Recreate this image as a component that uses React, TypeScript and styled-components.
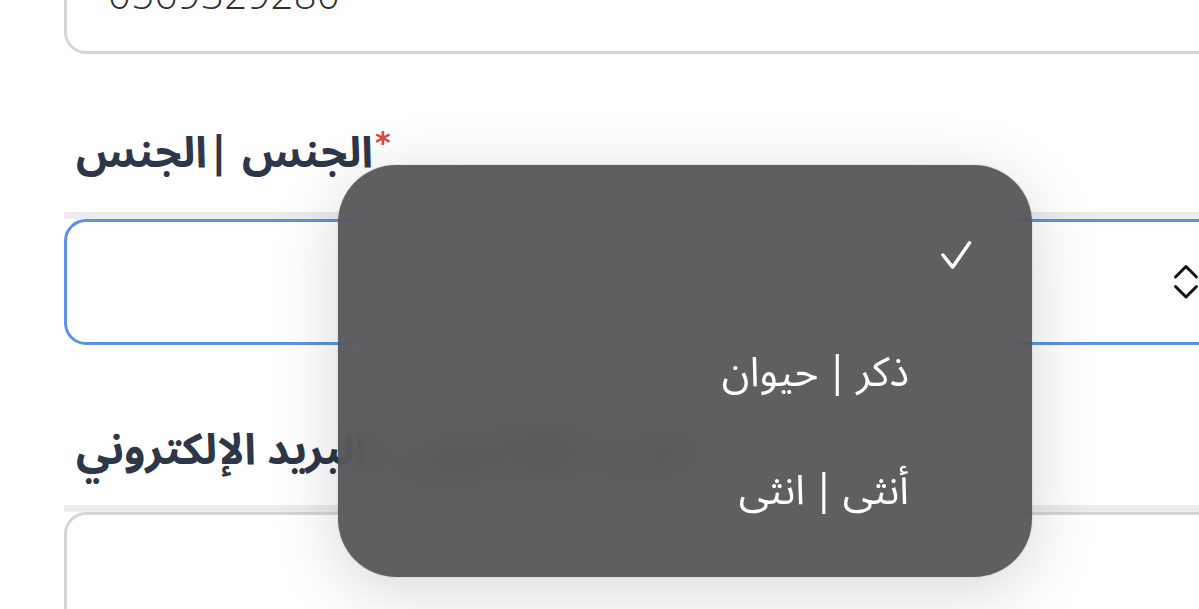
import React from "react";
import styled, { createGlobalStyle } from "styled-components";

const Global = createGlobalStyle`
  html, body { margin: 0; padding: 0; background: #ffffff; }
  body { width: 1199px; height: 609px; overflow: hidden; }
  #root { width: 1199px; height: 609px; }
`;

const arabic = `"Noto Sans Arabic", "Noto Kufi Arabic", "DejaVu Sans", sans-serif`;

const Page = styled.div`
  position: relative;
  width: 1199px;
  height: 609px;
  overflow: hidden;
  padding-left: 64px;
  box-sizing: border-box;
  display: flex;
  flex-direction: column;
`;

const Field = styled.div<{ $focused?: boolean }>`
  flex: none;
  height: 126px;
  margin-right: -60px;
  box-sizing: border-box;
  border: 3px solid ${(p) => (p.$focused ? "#5b92e2" : "#d3d5d9")};
  border-radius: 22px;
  background: #fff;
  display: flex;
  align-items: center;
`;

const PhoneField = styled(Field)`
  margin-top: -72px;
  padding-left: 41px;
  padding-top: 4px;
  font-family: "Open Sans", sans-serif;
  font-weight: 300;
  font-size: 40px;
  color: #2f2f31;
  letter-spacing: 0.4px;
`;

const SelectField = styled(Field)`
  justify-content: flex-end;
  padding-right: 57px;
`;

const Strip = styled.div`
  flex: none;
  height: 7px;
  margin-right: -60px;
  background: #ececee;
`;

const Label = styled.div<{ $top: number; $bottom: number }>`
  flex: none;
  display: flex;
  align-items: flex-start;
  padding-left: 12px;
  margin-top: ${(p) => p.$top}px;
  margin-bottom: ${(p) => p.$bottom}px;
  font-family: ${arabic};
  font-weight: 700;
  font-size: 43px;
  line-height: 64px;
  color: #2d3748;
  white-space: nowrap;
`;

const Star = styled.span`
  color: #e0463a;
  font-family: "DejaVu Sans", sans-serif;
  font-weight: 700;
  font-size: 30px;
  line-height: 30px;
  margin-left: 2px;
  margin-top: 6px;
`;

const Popup = styled.div`
  position: absolute;
  left: 338px;
  top: 165px;
  width: 694px;
  height: 412px;
  box-sizing: border-box;
  border-radius: 58px;
  background: rgba(78, 78, 80, 0.9);
  backdrop-filter: blur(18px);
  -webkit-backdrop-filter: blur(18px);
  box-shadow: 0 14px 70px rgba(0, 0, 0, 0.16), 0 0 2px rgba(0, 0, 0, 0.2);
  padding: 31px 60px 27px 40px;
  direction: rtl;
  display: flex;
  flex-direction: column;
`;

const Option = styled.div`
  height: 118px;
  display: flex;
  align-items: center;
  gap: 30px;
  color: #ffffff;
  font-family: ${arabic};
  font-weight: 400;
  font-size: 41px;
`;

const CheckCell = styled.div`
  width: 33px;
  height: 30px;
  flex: none;
  display: flex;
  align-items: center;
  justify-content: center;
`;

const OptionText = styled.span`
  white-space: nowrap;
  word-spacing: -3px;
`;

const Check = () => (
  <svg width="34" height="30" viewBox="0 0 34 30" fill="none">
    <path d="M4 15 L14 27.5 L31.5 2.5" stroke="#fff" strokeWidth="3.6" strokeLinecap="round" strokeLinejoin="round" />
  </svg>
);

const Chevrons = () => (
  <svg width="26" height="38" viewBox="0 0 26 38" fill="none">
    <path d="M2.5 14 L13 3.5 L23.5 14" stroke="#111" strokeWidth="3" strokeLinecap="round" strokeLinejoin="round" />
    <path d="M2.5 23.5 L13 34 L23.5 23.5" stroke="#111" strokeWidth="3" strokeLinecap="round" strokeLinejoin="round" />
  </svg>
);

const options = [
  { label: "", selected: true },
  { label: "ذكر | حيوان", selected: false },
  { label: "أنثى | انثى", selected: false },
];

export default function App() {
  return (
    <>
      <Global />
      <Page>
        <PhoneField>0569329280</PhoneField>
        <Label $top={68} $bottom={26}>
          <span>الجنس |الجنس</span>
          <Star>*</Star>
        </Label>
        <Strip />
        <SelectField $focused>
          <Chevrons />
        </SelectField>
        <Label $top={74} $bottom={22}>
          <span>البريد الإلكتروني |البريد الإلكتروني</span>
          <Star>*</Star>
        </Label>
        <Strip />
        <Field />
        <Popup>
          {options.map((o, i) => (
            <Option key={i}>
              <CheckCell>{o.selected ? <Check /> : null}</CheckCell>
              <OptionText>{o.label}</OptionText>
            </Option>
          ))}
        </Popup>
      </Page>
    </>
  );
}
